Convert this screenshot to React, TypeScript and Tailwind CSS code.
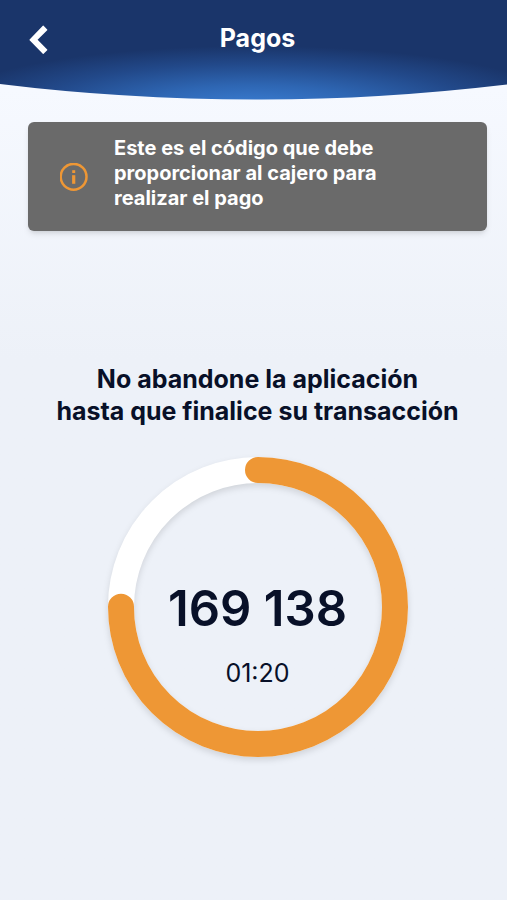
import React from 'react';

const RADIUS = 137;
const CIRCUMFERENCE = 2 * Math.PI * RADIUS;

function Header() {
  return (
    <header className="relative h-[100px] pl-7 pr-5">
      {/* Curved background with the glow at the bottom */}
      <svg
        className="absolute inset-0 w-full h-full"
        viewBox="0 0 507 100"
        preserveAspectRatio="none"
        aria-hidden="true"
      >
        <defs>
          <radialGradient
            id="glow"
            gradientUnits="userSpaceOnUse"
            cx="0"
            cy="0"
            r="1"
            gradientTransform="translate(254 106) scale(310 60)"
          >
            <stop offset="0" stopColor="#3a7dd2" />
            <stop offset="0.35" stopColor="#2e66b3" />
            <stop offset="0.7" stopColor="#22498a" />
            <stop offset="1" stopColor="#1a356a" />
          </radialGradient>
        </defs>
        <path d="M0 0H507V84.5Q380 99.5 262 99.5Q125 99.5 0 84Z" fill="url(#glow)" />
      </svg>

      <div className="relative h-20 grid grid-cols-[24px_1fr_24px] items-center">
        <button type="button" aria-label="Volver" className="cursor-pointer">
          <svg className="w-6 h-8" viewBox="0 0 24 32" fill="none" aria-hidden="true">
            <path
              d="M15.6 1.8L19.2 5.4Q19.6 5.8 19.2 6.2L9.6 15.8L19.2 25.4Q19.6 25.8 19.2 26.2L15.6 29.8Q15.2 30.2 14.8 29.8L1.6 16.2Q1.2 15.8 1.6 15.4L14.8 1.8Q15.2 1.4 15.6 1.8Z"
              fill="#fff"
            />
          </svg>
        </button>
        <h1 className="text-center text-[25px] leading-8 font-bold text-white pb-1">Pagos</h1>
      </div>
    </header>
  );
}

function Notice() {
  return (
    <div className="mt-[22px] min-h-[109px] flex items-start rounded-md bg-[#6a6a6a] shadow-md pl-8 pr-4 pt-[14px] pb-5">
      <svg
        className="w-[28px] h-[28px] mt-[27px] mr-[26px] shrink-0"
        viewBox="0 0 28 28"
        fill="none"
        stroke="#ee9735"
        aria-hidden="true"
      >
        <circle cx="13.6" cy="13.8" r="12.9" strokeWidth="2.5" />
        <path d="M13.7 12.2V20.8" strokeWidth="3.2" />
        <path d="M13.7 7.2V10" strokeWidth="3" />
      </svg>
      <p className="max-w-[290px] text-xl leading-[25px] font-bold text-white">
        Este es el código que debe proporcionar al cajero para realizar el pago
      </p>
    </div>
  );
}

function Countdown({ code, time, progress }: { code: string; time: string; progress: number }) {
  return (
    <div className="mt-[30px] mx-auto w-[300px] h-[300px] grid">
      <svg
        className="col-start-1 row-start-1 w-full h-full overflow-visible drop-shadow-md"
        viewBox="0 0 300 300"
        fill="none"
        aria-hidden="true"
      >
        <circle cx="150" cy="150" r={RADIUS} stroke="#fff" strokeWidth="26" />
        <circle
          cx="150"
          cy="150"
          r={RADIUS}
          stroke="#ee9735"
          strokeWidth="26"
          strokeLinecap="round"
          strokeDasharray={`${CIRCUMFERENCE * progress} ${CIRCUMFERENCE}`}
          transform="rotate(-90 150 150)"
        />
      </svg>
      <div className="col-start-1 row-start-1 flex flex-col items-center pt-[122px] text-[#081028]">
        <p className="text-[49px] leading-[60px] font-semibold">{code}</p>
        <p className="mt-[18px] text-[25px] leading-8">{time}</p>
      </div>
    </div>
  );
}

export default function App() {
  return (
    <div className="min-h-screen bg-[#edf1f8] bg-linear-to-b from-[#f6f9ff] from-10% to-[#edf1f8] to-40% font-['Inter',sans-serif]">
      <Header />
      <main className="pl-7 pr-5 pb-12">
        <Notice />
        <h2 className="mt-[132px] text-center text-[25px] leading-8 font-bold text-[#081028]">
          No abandone la aplicación
          <br />
          hasta que finalice su transacción
        </h2>
        <Countdown code="169 138" time="01:20" progress={0.75} />
      </main>
    </div>
  );
}
